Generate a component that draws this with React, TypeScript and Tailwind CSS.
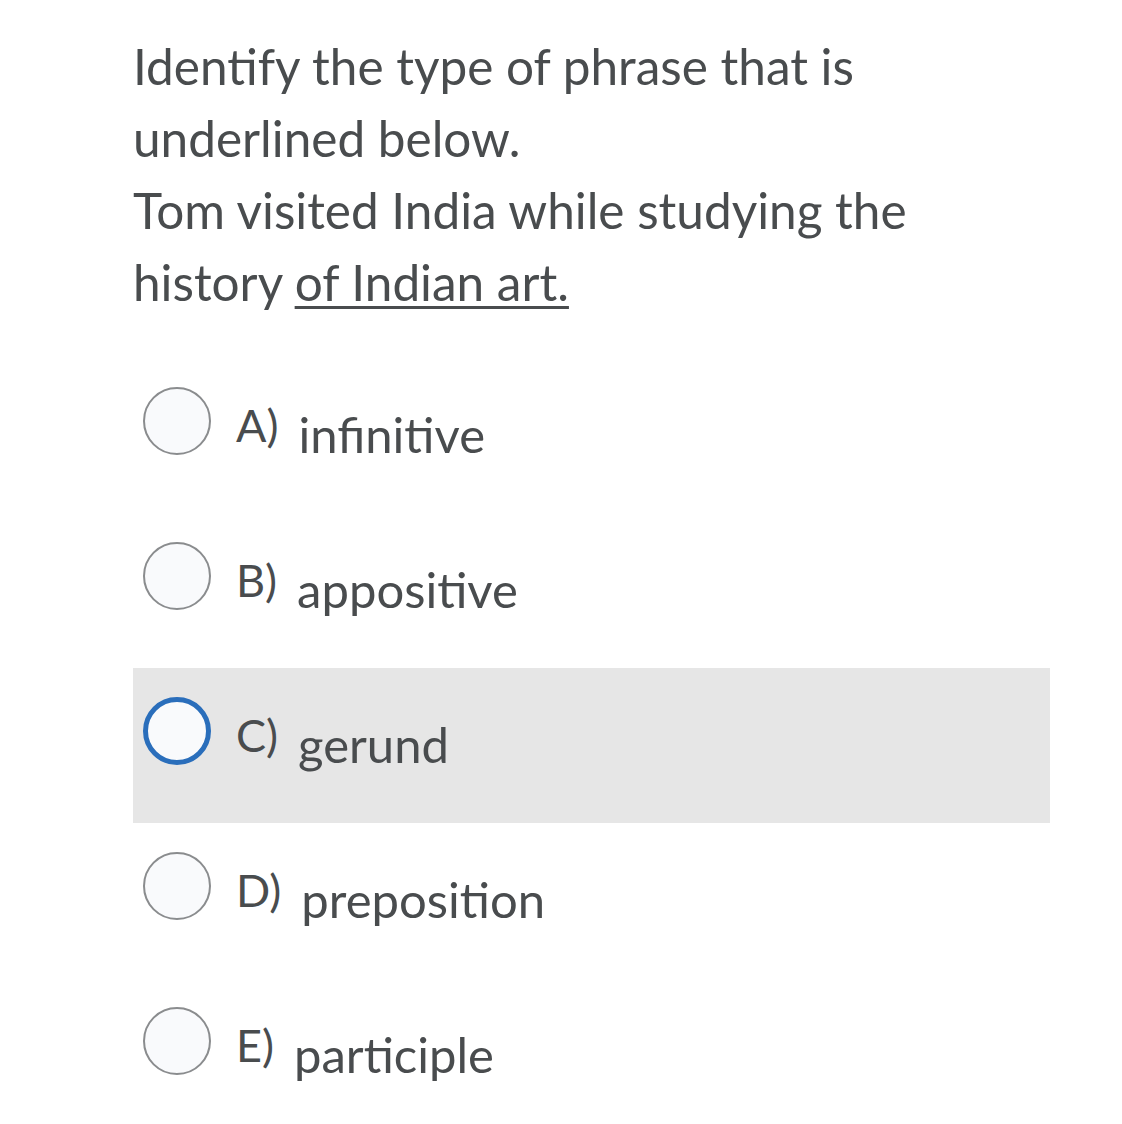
import React, { useState } from "react";

const options = [
  { key: "A", text: "infinitive" },
  { key: "B", text: "appositive" },
  { key: "C", text: "gerund" },
  { key: "D", text: "preposition" },
  { key: "E", text: "participle" },
];

export default function App() {
  const [selected, setSelected] = useState("C");

  return (
    <div
      className="min-h-screen w-[1122px] h-[1124px] bg-white text-[#494c4e] overflow-hidden"
      style={{ fontFamily: "Lato, 'Open Sans', sans-serif" }}
    >
      <div className="pl-[133px] pr-[72px] pt-[30px]">
        {/* Question */}
        <div className="w-[800px] text-[49.5px] leading-[72px]">
          <p>Identify the type of phrase that is underlined below.</p>
          <p>
            Tom visited India while studying the history{" "}
            <span className="underline underline-offset-[5px] decoration-[3px]">of Indian art.</span>
          </p>
        </div>

        {/* Options */}
        <div className="mt-[40px] flex flex-col">
          {options.map((o) => {
            const active = selected === o.key;
            return (
              <div
                key={o.key}
                onClick={() => setSelected(o.key)}
                className={`flex items-start h-[155px] pl-[10px] pt-[29px] cursor-pointer ${
                  active ? "bg-[#e6e6e6]" : ""
                }`}
              >
                <div
                  className={`w-[68px] h-[68px] rounded-full shrink-0 bg-[#f9fafc] ${
                    active ? "border-[5px] border-[#2a6ebb]" : "border-2 border-[#8a8c8e]"
                  }`}
                />
                <span className="ml-[25px] mt-[12px] text-[45px] leading-[52px]">{o.key})</span>
                <span className="ml-[20px] mt-[19px] text-[49px] leading-[56px]">{o.text}</span>
              </div>
            );
          })}
        </div>
      </div>
    </div>
  );
}
